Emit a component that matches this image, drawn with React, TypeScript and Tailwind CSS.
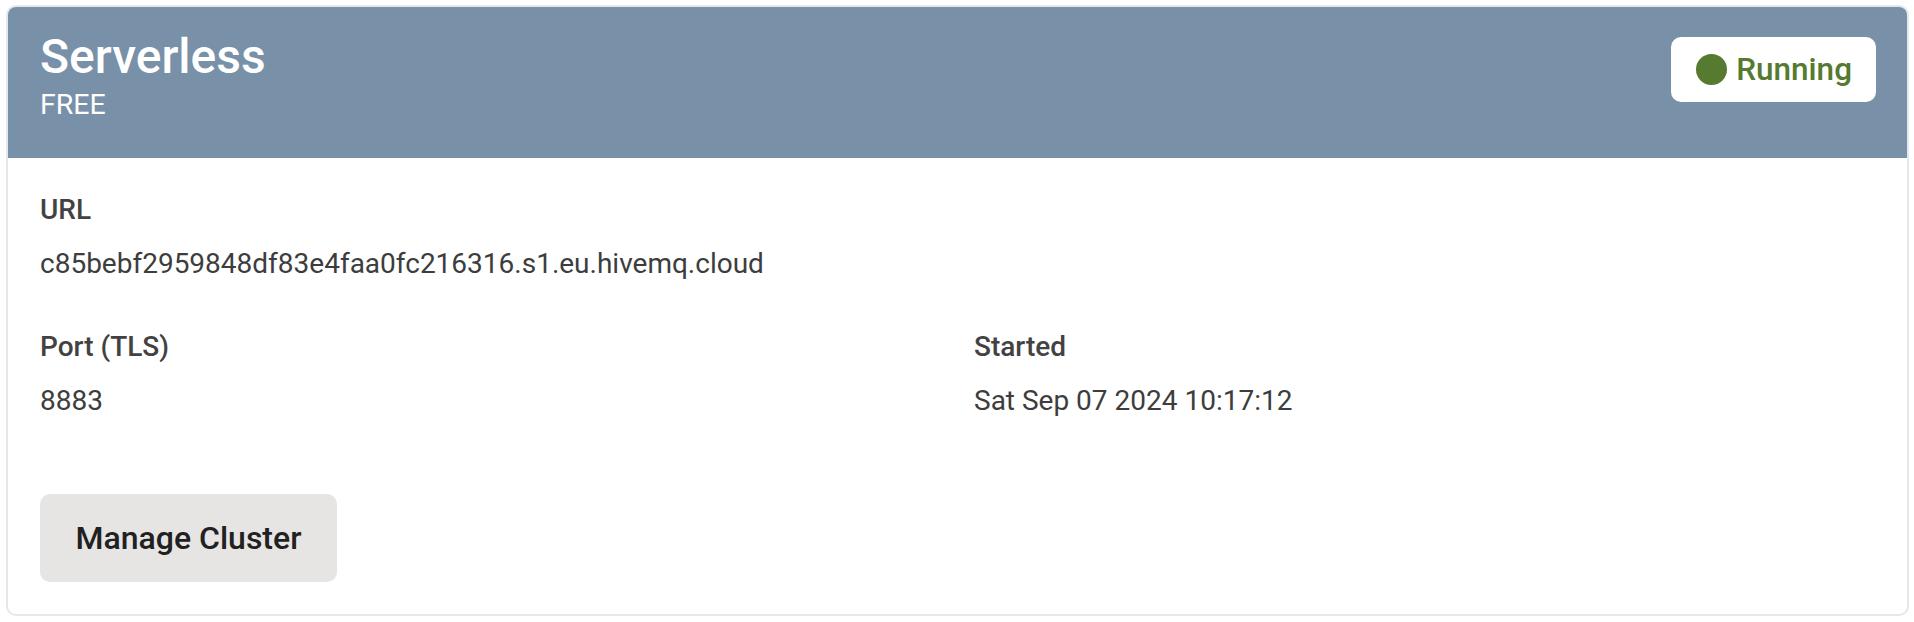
import React from "react";

const details = [
  { label: "Port (TLS)", value: "8883" },
  { label: "Started", value: "Sat Sep 07 2024 10:17:12" },
];

function Field({ label, value }: { label: string; value: string }) {
  return (
    <div>
      <div className="text-[28px] leading-[33px] font-medium text-[#424242]">{label}</div>
      <div className="mt-[21px] text-[28px] leading-[33px] text-[#3d3d3d]">{value}</div>
    </div>
  );
}

export default function App() {
  return (
    <div className="bg-white min-h-screen pt-[5px] pl-[6px] pr-[5px] font-['Roboto',sans-serif]">
      <div className="rounded-[10px] border-2 border-[#e3e8ef] overflow-hidden bg-white">
        {/* Header */}
        <div className="flex items-start justify-between bg-[#7890a8] pl-[32px] pr-[31px] pt-[22px] pb-[37px]">
          <div>
            <h1 className="text-[48px] leading-[56px] font-medium text-white">Serverless</h1>
            <p className="mt-[4px] text-[28.5px] leading-[32px] text-white">FREE</p>
          </div>
          <div className="mt-[8px] flex items-center gap-[9px] rounded-[10px] bg-white pl-[25px] pr-[24px] h-[65px]">
            <span className="w-[31px] h-[31px] rounded-full bg-[#557a30]" />
            <span className="text-[31.5px] leading-[36px] font-medium text-[#557a30]">Running</span>
          </div>
        </div>

        {/* Body */}
        <div className="px-[32px] pt-[35px] pb-[32px]">
          <Field label="URL" value="c85bebf2959848df83e4faa0fc216316.s1.eu.hivemq.cloud" />
          <div className="mt-[50px] grid grid-cols-2 gap-x-[33px]">
            {details.map((d) => (
              <Field key={d.label} label={d.label} value={d.value} />
            ))}
          </div>
          <button className="mt-[77px] h-[88px] w-[297px] rounded-[10px] bg-[#e6e5e4] text-[32px] font-medium text-[#212121]">
            Manage Cluster
          </button>
        </div>
      </div>
    </div>
  );
}
